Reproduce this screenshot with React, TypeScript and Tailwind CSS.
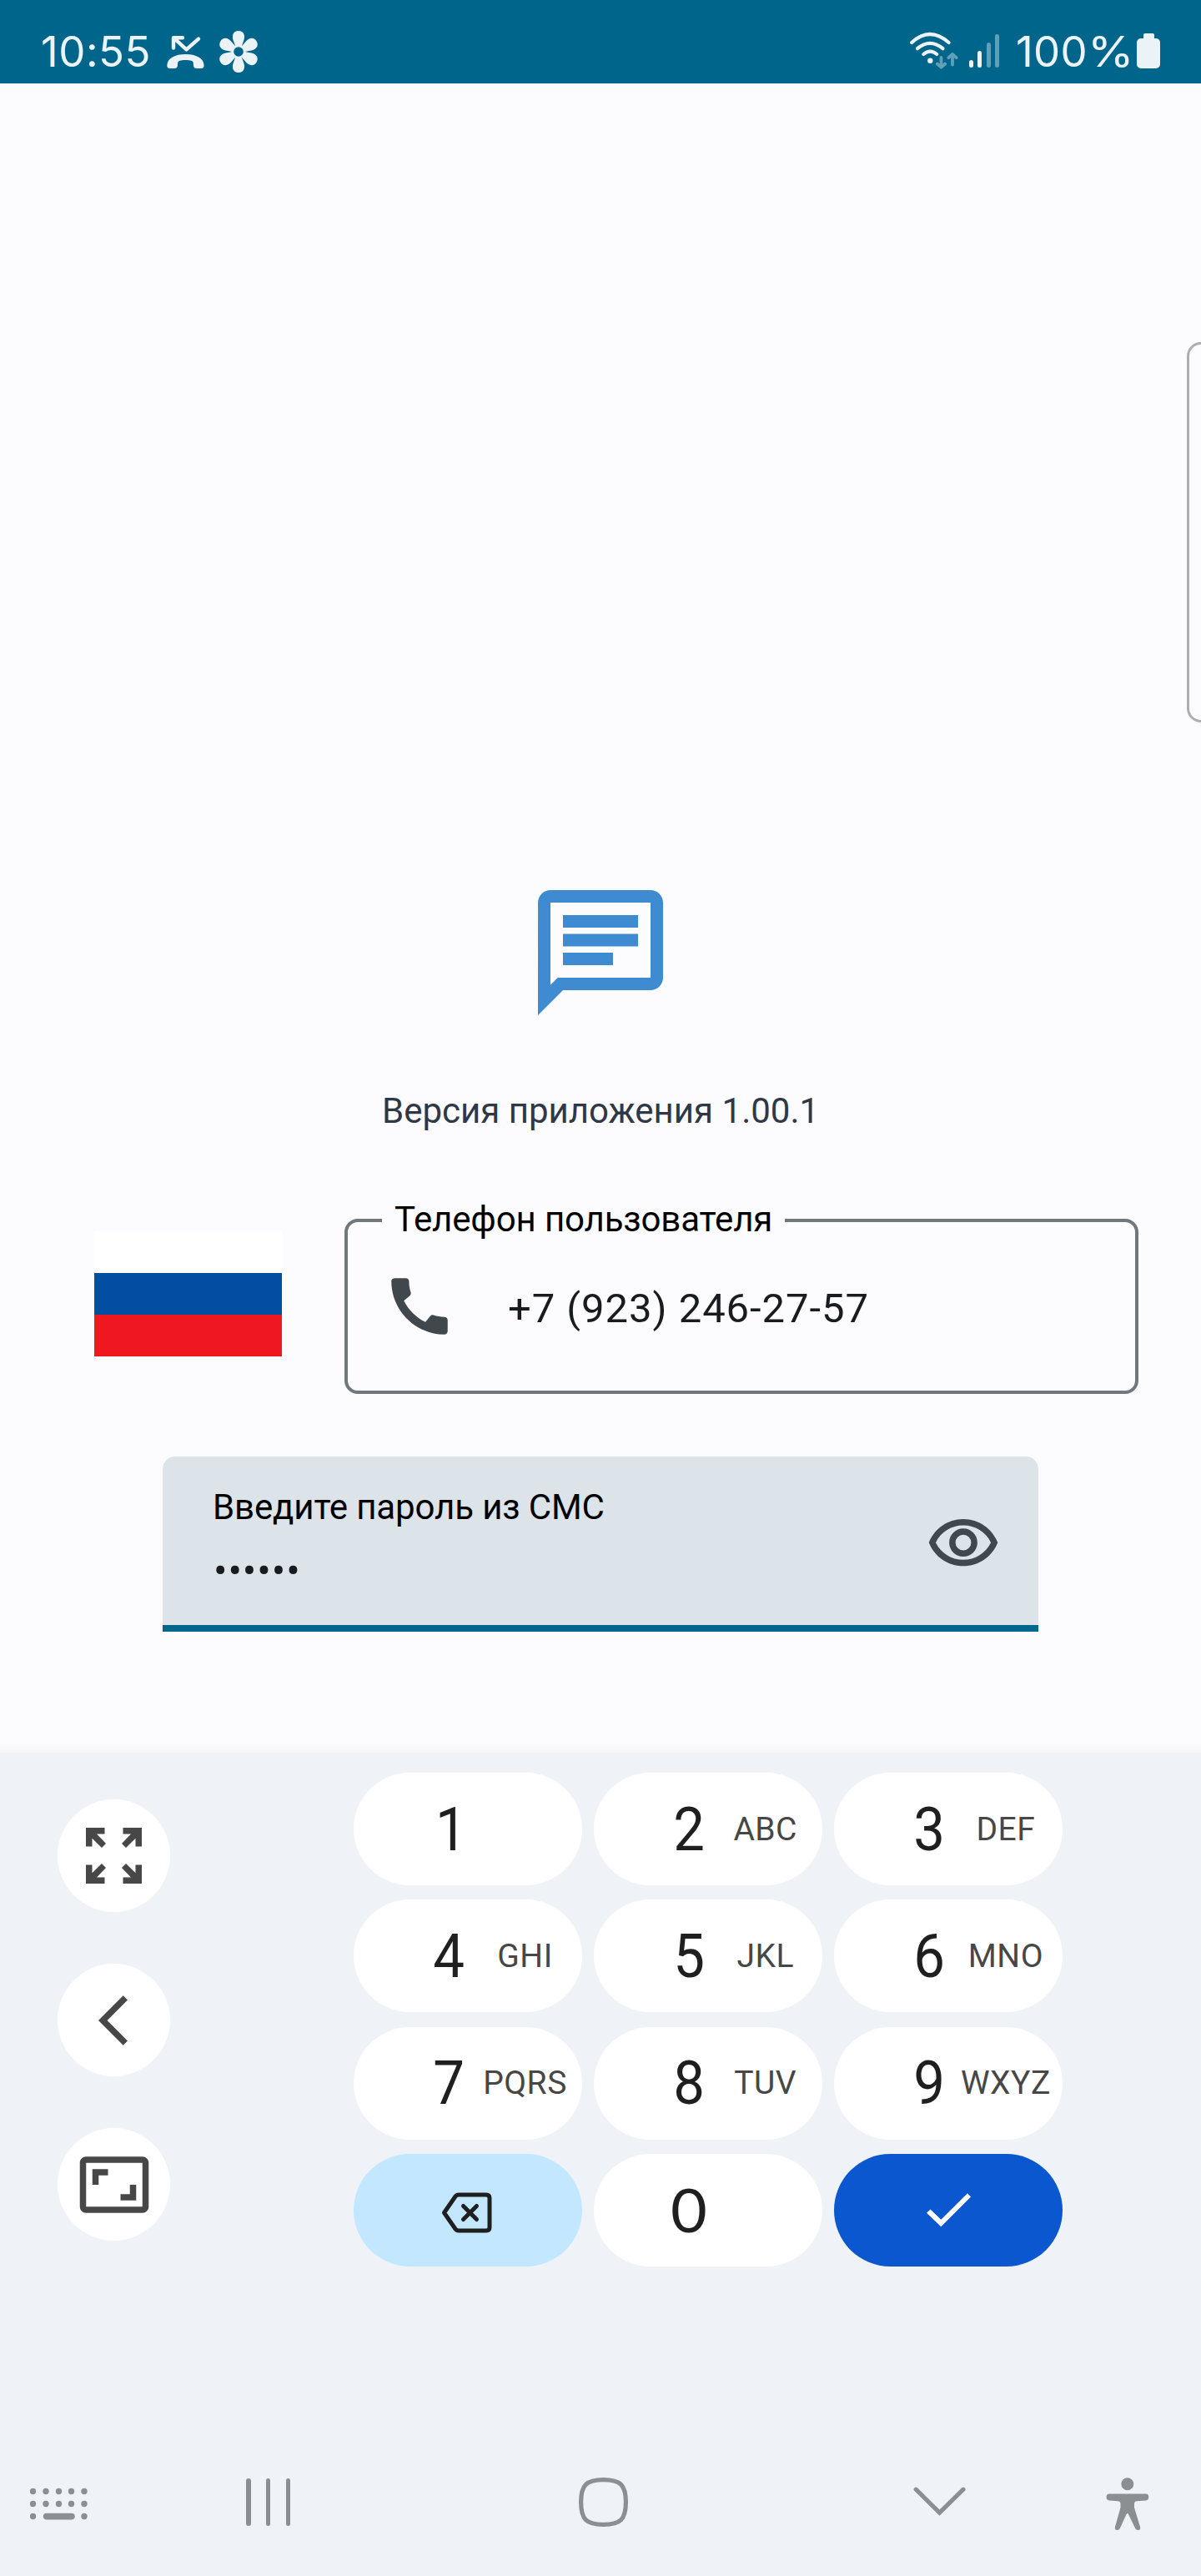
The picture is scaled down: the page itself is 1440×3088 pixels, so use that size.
import type { ReactNode } from 'react'
import { MdAspectRatio, MdCall, MdOutlineChat, MdOutlineVisibility } from 'react-icons/md'

function MissedCallIcon() {
  return (
    <svg className="h-[42px] w-[46px]" viewBox="0 0 46 42" fill="none">
      <path d="M19 3.2H8v12.3M8.5 3.7L23.5 17.4L38 4.6" stroke="#ebf3f6" strokeWidth="4.4" strokeLinecap="round" strokeLinejoin="round" />
      <path
        d="M3.5 40C1.3 40 .2 38.6.3 36.5C.6 27.5 10 23 22.5 23C35 23 44.300 27.500 44.600 36.500C44.700 38.600 43.600 40 41.400 40H35.800C33.500 40 32.300 39 32 36.800L31.700 33C31.500 31.300 28.500 30 22.500 30C16.500 30 13.500 31.300 13.200 33L12.900 36.800C12.600 39 11.500 40 9.200 40Z"
        fill="#ebf3f6"
      />
    </svg>
  )
}

const petalAngles = [0, 60, 120, 180, 240, 300]

function FlowerIcon() {
  return (
    <svg className="h-[52px] w-[50px]" viewBox="-25 -26 50 52">
      {petalAngles.map((angle) => (
        <path key={angle} transform={`rotate(${angle})`} d="M-3-4L-5.500-11.500C-9-19-6.500-25 0-25S9-19 5.500-11.500L3-4Z" fill="#ebf3f6" />
      ))}
      <circle r="8.500" fill="#ebf3f6" />
      <circle r="5.800" fill="#00658b" />
    </svg>
  )
}

function WifiIcon() {
  return (
    <svg className="h-[48px] w-[60px]" viewBox="0 0 60 48" fill="none" strokeLinecap="round" strokeLinejoin="round">
      <g stroke="#ebf3f6" strokeWidth="4.200">
        <path d="M3.200 14Q24.800-6 47.500 14" />
        <path d="M10 21.200Q25 8.500 40.500 21.200" />
        <path d="M17.300 28Q25.300 21.300 33.300 28" />
      </g>
      <circle cx="25.300" cy="35.700" r="3.200" fill="#ebf3f6" />
      <g stroke="#5f9fb8" strokeWidth="3.800">
        <path d="M38.500 32V43.500M33.800 39.500L38.500 43.700L43.200 39.500" />
        <path d="M52 40.500V28.500M47.300 32.200L52 28L56.700 32.200" />
      </g>
    </svg>
  )
}

function StatusBar() {
  return (
    <header className="flex h-[100px] justify-between bg-[#00658b] pr-[49px] pl-[49px] text-[51px] leading-[60px] text-[#ebf3f6]">
      <div className="flex items-start">
        <span className="mt-[32px] w-[151px] font-['Inter',sans-serif] tracking-[0.5px]">10:55</span>
        <div className="mt-[42px]">
          <MissedCallIcon />
        </div>
        <div className="mt-[36px] ml-[15px]">
          <FlowerIcon />
        </div>
      </div>
      <div className="flex items-start">
        <div className="mt-[37px]">
          <WifiIcon />
        </div>
        <div className="mt-[41px] ml-[12px] flex h-[40px] items-end gap-[5.400px]">
          <i className="h-[9px] w-[5px] rounded-full bg-[#ebf3f6]" />
          <i className="h-[20px] w-[5px] rounded-full bg-[#ebf3f6]" />
          <i className="h-[30px] w-[5px] rounded-full bg-[#5f9fb8]" />
          <i className="h-[40px] w-[5px] rounded-full bg-[#5f9fb8]" />
        </div>
        <span className="mt-[32px] ml-[20px] w-[145px] font-['Inter',sans-serif] tracking-[0.300px]">
          100<span className="inline-block origin-left scale-x-[1.110]">%</span>
        </span>
        <div className="mt-[40px] flex w-[28px] flex-col items-center">
          <i className="h-[6px] w-[13px] rounded-t-[2px] bg-[#ebf3f6]" />
          <i className="h-[36px] w-[28px] rounded-[5px] bg-[#ebf3f6]" />
        </div>
      </div>
    </header>
  )
}

function Flag() {
  return (
    <div className="mt-[15px] flex h-[150px] w-[225px] flex-col">
      <i className="flex-1 bg-white" />
      <i className="flex-1 bg-[#034ea2]" />
      <i className="flex-1 bg-[#ef1820]" />
    </div>
  )
}

function PhoneField() {
  return (
    <div className="relative flex h-[210px] w-[952px] items-center rounded-[16px] border-4 border-[#70787e] pl-[41px]">
      <span className="absolute -top-[28px] left-[41px] w-[483px] bg-[#fcfcff] pl-[15px] text-[42px] leading-[50px] tracking-[-0.130px] whitespace-nowrap text-black">
        Телефон пользователя
      </span>
      <MdCall className="size-[90px] shrink-0 text-[#41484d]" />
      <span className="mt-[5px] ml-[61px] text-[49px] leading-[60px] tracking-[0.950px] whitespace-nowrap text-[#191c1e]">
        +7 (923) 246-27-57
      </span>
    </div>
  )
}

function PasswordField() {
  return (
    <div className="mt-[75px] ml-[195px] flex h-[210px] w-[1050px] justify-between rounded-t-[15px] border-b-8 border-[#00668b] bg-[#dce3e9] pr-[45px] pl-[60px]">
      <div className="flex flex-col pt-[36px]">
        <span className="text-[42px] leading-[50px] tracking-[-0.130px] text-black">Введите пароль из СМС</span>
        <span className="mt-[22px] pl-px text-[49px] leading-[60px] tracking-[0.900px] text-[#191c1e]">••••••</span>
      </div>
      <MdOutlineVisibility className="mt-[60px] size-[90px] text-[#41484d]" />
    </div>
  )
}

function RoundButton({ children }: { children: ReactNode }) {
  return <button className="flex size-[135px] items-center justify-center rounded-full bg-white text-[#464746]">{children}</button>
}

const arrow = 'M0 0H22.500V7.500H13L24 19L19 24L7.500 12.800V22.500H0Z'

function ExpandIcon() {
  return (
    <svg className="size-[67px]" viewBox="0 0 67 67" fill="currentColor">
      <path d={arrow} />
      <path d={arrow} transform="matrix(-1 0 0 1 67 0)" />
      <path d={arrow} transform="matrix(1 0 0 -1 0 67)" />
      <path d={arrow} transform="matrix(-1 0 0 -1 67 67)" />
    </svg>
  )
}

function BackIcon() {
  return (
    <svg className="mr-[2px] h-[60px] w-[35px]" viewBox="0 0 35 60" fill="currentColor">
      <path d="M0 30L29.700 .3L35 5.600L10.600 30L35 54.400L29.700 59.700Z" />
    </svg>
  )
}

function BackspaceIcon() {
  return (
    <svg className="h-[49px] w-[61px]" viewBox="0 0 61 49" fill="none" stroke="#1f1f1f" strokeWidth="5" strokeLinejoin="round">
      <path d="M3.500 24.500L17 5Q18.500 3 21 3H54Q58 3 58 7V42Q58 46 54 46H21Q18.500 46 17 44Z" />
      <path d="M26.500 16.500L42.500 32.500M42.500 16.500L26.500 32.500" strokeLinecap="round" />
    </svg>
  )
}

function CheckIcon() {
  return (
    <svg className="h-[41px] w-[53px]" viewBox="0 0 53 41" fill="#ffffff">
      <path d="M0 23.800L4.500 19.500L17.300 31.700L49 .2L53 4.500L17.300 40.200Z" />
    </svg>
  )
}

function DigitKey({ digit, letters }: { digit: string; letters?: string }) {
  return (
    <button className="flex h-[135px] items-center rounded-full bg-white pl-[68px]">
      {digit === '0' ? (
        <span className="mb-[4px] w-[92px] scale-x-[1.050] text-center font-['Lato',sans-serif] text-[72px] leading-[90px] text-[#1f1f1f]">0</span>
      ) : (
        <span className={`w-[92px] scale-x-[0.920] text-center text-[73px] leading-[90px] text-[#1f1f1f] ${digit === '1' ? 'pl-[6px]' : ''}`}>
          {digit}
        </span>
      )}
      {letters && (
        <span className="flex w-[91px] justify-center text-[39px] leading-[50px] tracking-[0.500px] text-[#474747]">{letters}</span>
      )}
    </button>
  )
}

const keys = [
  { digit: '1' },
  { digit: '2', letters: 'ABC' },
  { digit: '3', letters: 'DEF' },
  { digit: '4', letters: 'GHI' },
  { digit: '5', letters: 'JKL' },
  { digit: '6', letters: 'MNO' },
  { digit: '7', letters: 'PQRS' },
  { digit: '8', letters: 'TUV' },
  { digit: '9', letters: 'WXYZ' },
]

const dotColumns = [3.5, 19, 34.5, 49.5, 65]

function NavBar() {
  return (
    <nav className="mt-[253px] flex items-start pl-[36px] text-[#8b8f92]">
      <svg className="mt-[12px] h-[40px] w-[69px]" viewBox="0 0 69 40" fill="currentColor">
        {dotColumns.map((x) => (
          <g key={x}>
            <circle cx={x} cy="4.500" r="3.700" />
            <circle cx={x} cy="19.500" r="3.700" />
          </g>
        ))}
        <circle cx="3.500" cy="34.500" r="3.700" />
        <rect x="15.800" y="30.700" width="38" height="7.700" rx="3.800" />
        <circle cx="65" cy="34.500" r="3.700" />
      </svg>
      <div className="mt-px ml-[190px] flex gap-[18.200px]">
        <i className="h-[57px] w-[5.600px] rounded-full bg-current" />
        <i className="h-[57px] w-[5.600px] rounded-full bg-current" />
        <i className="h-[57px] w-[5.600px] rounded-full bg-current" />
      </div>
      <svg className="ml-[346px] size-[59px]" viewBox="0 0 59 59" fill="none">
        <path
          d="M29.500 2.600C50 2.600 56.400 9 56.400 29.500S50 56.400 29.500 56.400S2.600 50 2.600 29.500S9 2.600 29.500 2.600Z"
          stroke="currentColor"
          strokeWidth="5.200"
        />
      </svg>
      <svg className="mt-[10px] ml-[342px] h-[38px] w-[64px]" viewBox="0 0 64 38" fill="none">
        <path d="M3.200 4.200L31.500 32L60 4.200" stroke="currentColor" strokeWidth="5.200" strokeLinecap="round" />
      </svg>
      <svg className="ml-[166px] h-[64px] w-[54px]" viewBox="0 0 54 64" fill="currentColor">
        <circle cx="26.800" cy="7.700" r="7.500" />
        <path d="M5 19.500H49Q52.300 19.500 52.300 23.500Q52.300 27 49 27.500L38 28.300Q35 28.500 35 31.500V36L42 59Q43 63 39.500 63Q36.800 63 36 60.500L28 44Q26.800 42 25.600 44L18 60.500Q17 63 14.500 63Q11 63 12 59L18.500 36V31.500Q18.500 28.500 15.500 28.300L5 27.500Q1.500 27 1.500 23.500Q1.500 19.500 5 19.500Z" />
      </svg>
    </nav>
  )
}

function Keyboard() {
  return (
    <section className="h-[987px] bg-[#eff3f8] pt-[24px]">
      <div className="flex items-start pl-[69px]">
        <div className="mt-[32px] flex flex-col gap-[62px]">
          <RoundButton>
            <ExpandIcon />
          </RoundButton>
          <RoundButton>
            <BackIcon />
          </RoundButton>
          <RoundButton>
            <MdAspectRatio className="size-[90px]" />
          </RoundButton>
        </div>
        <div className="ml-[220px] grid w-[850.400px] grid-cols-3 gap-x-[14.200px] gap-y-[17.400px]">
          {keys.map((key) => (
            <DigitKey key={key.digit} digit={key.digit} letters={key.letters} />
          ))}
          <button className="flex h-[135px] items-center rounded-full bg-[#c2e7ff] pt-[5px] pl-[105px]">
            <BackspaceIcon />
          </button>
          <DigitKey digit="0" />
          <button className="flex h-[135px] items-center justify-center rounded-full bg-[#0b57d0]">
            <CheckIcon />
          </button>
        </div>
      </div>
      <NavBar />
    </section>
  )
}

export default function App() {
  return (
    <div className="relative h-[3088px] w-[1440px] overflow-hidden bg-[#fcfcff] font-['Roboto',sans-serif]">
      <StatusBar />
      <main className="flex h-[2001px] flex-col">
        <MdOutlineChat className="mt-[952px] size-[180px] shrink-0 self-center text-[#3f8bd2]" />
        <p className="mt-[75px] ml-[458px] text-[42px] leading-[50px] text-[#2f3847]">Версия приложения 1.00.1</p>
        <div className="mt-[104px] flex items-start gap-[75px] pl-[113px]">
          <Flag />
          <PhoneField />
        </div>
        <PasswordField />
        <div className="mt-auto h-[12px] bg-linear-to-b from-[#fcfcff] to-[#f3f4f5]" />
      </main>
      <Keyboard />
      <aside className="absolute top-[410px] -right-[20px] h-[456px] w-[37px] rounded-[17px] border-[3px] border-[#adaeae]" />
    </div>
  )
}
